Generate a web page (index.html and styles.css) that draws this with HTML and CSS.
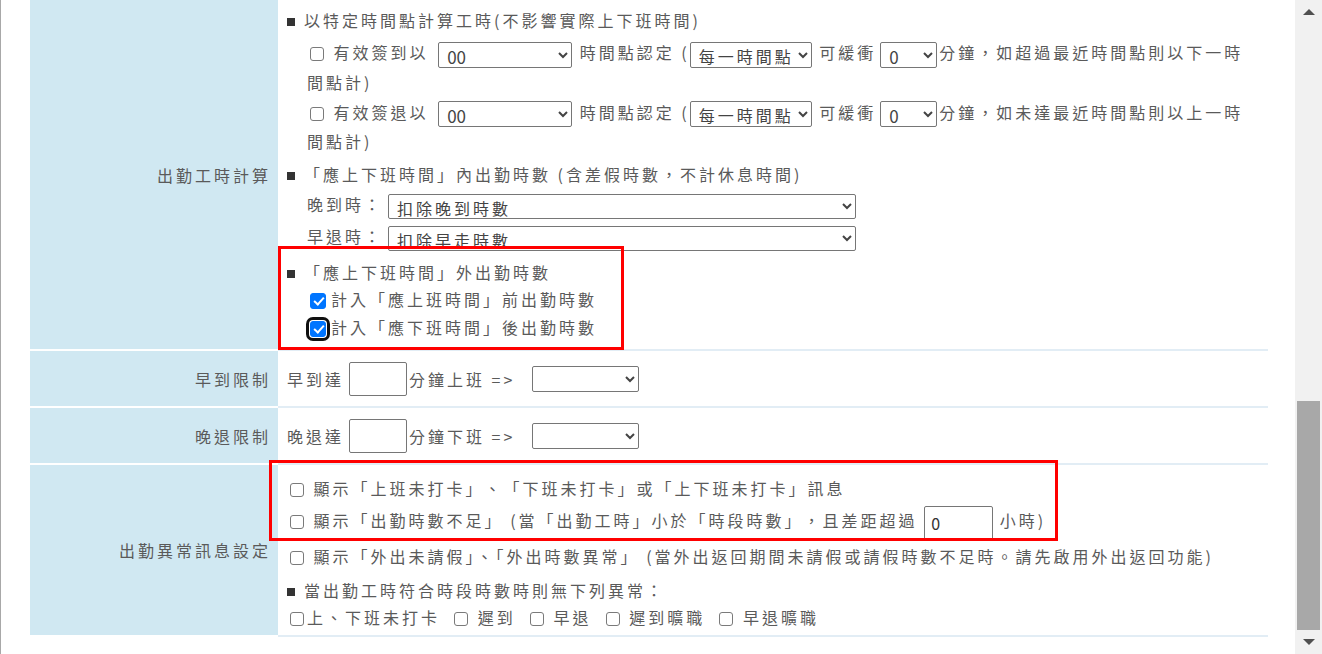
FILE: index.html
```html
<!DOCTYPE html>
<html lang="zh-Hant">
<head>
<meta charset="utf-8">
<title>出勤設定</title>
<link rel="stylesheet" href="styles.css">
</head>
<body>
<div class="frame">
  <div class="main">
    <div class="table">
      <div class="row">
        <div class="label">出勤工時計算</div>
        <div class="content c1">
          <div class="ln l1"><span class="sq"></span>以特定時間點計算工時(不影響實際上下班時間)</div>
          <div class="par ind p1"><input type="checkbox" class="cb"> 有效簽到以 <select class="sel sel-hh"><option>00</option></select> 時間點認定 (<select class="sel sel-every"><option>每一時間點</option></select> 可緩衝<select class="sel sel-m"><option>0</option></select>分鐘，如超過最近時間點則以下一時間點計)</div>
          <div class="par ind p2"><input type="checkbox" class="cb"> 有效簽退以 <select class="sel sel-hh"><option>00</option></select> 時間點認定 (<select class="sel sel-every"><option>每一時間點</option></select> 可緩衝<select class="sel sel-m"><option>0</option></select>分鐘，如未達最近時間點則以上一時間點計)</div>
          <div class="ln l6"><span class="sq"></span>「應上下班時間」內出勤時數 (含差假時數，不計休息時間)</div>
          <div class="ln ind selrow">晚到時：<select class="sel sel-wide"><option>扣除晚到時數</option></select></div>
          <div class="ln ind selrow">早退時：<select class="sel sel-wide"><option>扣除早走時數</option></select></div>
          <div class="ln l9"><span class="sq"></span>「應上下班時間」外出勤時數</div>
          <div class="ln ind l10"><input type="checkbox" class="cb" checked>計入「應上班時間」前出勤時數</div>
          <div class="ln ind l11"><input type="checkbox" class="cb focus" checked>計入「應下班時間」後出勤時數</div>
        </div>
      </div>
      <div class="row">
        <div class="label">早到限制</div>
        <div class="content c2">早到達<input type="text" class="txt txt-min"><span class="after">分鐘上班 =&gt;</span><select class="sel sel-empty"><option></option></select></div>
      </div>
      <div class="row">
        <div class="label">晚退限制</div>
        <div class="content c2">晚退達<input type="text" class="txt txt-min"><span class="after">分鐘下班 =&gt;</span><select class="sel sel-empty"><option></option></select></div>
      </div>
      <div class="row">
        <div class="label">出勤異常訊息設定</div>
        <div class="content c4">
          <div class="ln m1"><input type="checkbox" class="cb"> 顯示「上班未打卡」、「下班未打卡」或「上下班未打卡」訊息</div>
          <div class="ln m2"><input type="checkbox" class="cb"> 顯示「出勤時數不足」 (當「出勤工時」小於「時段時數」，且差距超過 <input type="text" class="txt txt-hr" value="0"> 小時)</div>
          <div class="ln m3"><input type="checkbox" class="cb"> 顯示「外出未請假」、「外出時數異常」 (當外出返回期間未請假或請假時數不足時。請先啟用外出返回功能)</div>
          <div class="ln m4"><span class="sq"></span>當出勤工時符合時段時數時則無下列異常：</div>
          <div class="ln m5"><input type="checkbox" class="cb">上、下班未打卡&nbsp; <input type="checkbox" class="cb cb-n"> 遲到&nbsp; <input type="checkbox" class="cb cb-n"> 早退&nbsp; <input type="checkbox" class="cb cb-n"> 遲到曠職&nbsp; <input type="checkbox" class="cb cb-n"> 早退曠職</div>
        </div>
      </div>
    </div>
    <div class="mark mark1"></div>
    <div class="mark mark2"></div>
  </div>
  <div class="scrollbar">
    <div class="sb-btn"><span class="arrow up"></span></div>
    <div class="sb-track"><div class="sb-thumb"></div></div>
    <div class="sb-btn"><span class="arrow down"></span></div>
  </div>
</div>
</body>
</html>
```
FILE: styles.css
```css
html, body {
  margin: 0;
  padding: 0;
  background: #ffffff;
}
body {
  font-family: "Noto Sans CJK TC", "Noto Sans", sans-serif;
  font-size: 16px;
  letter-spacing: 3px;
  color: #5a5a5a;
  overflow: hidden;
  text-spacing-trim: space-all;
}
.frame {
  display: flex;
  height: 654px;
  border-left: 1px solid #a8a8a8;
  box-sizing: border-box;
}
.main {
  position: relative;
  flex: 1;
  overflow: hidden;
}
.table {
  margin-left: 29px;
  width: 1238px;
}
.row {
  display: flex;
}
.label {
  width: 248px;
  flex: none;
  background: #d0e8f2;
  border-bottom: 2px solid #ffffff;
  box-sizing: border-box;
  display: flex;
  align-items: center;
  justify-content: flex-end;
  padding-right: 7px;
  white-space: nowrap;
}
.content {
  flex: 1;
  border-bottom: 2px solid #e2edf5;
  padding: 0 6px 0 9px;
  box-sizing: border-box;
}
.sq {
  display: inline-block;
  width: 8px;
  height: 8px;
  background: #333333;
  margin-right: 9px;
  vertical-align: 1px;
}
.ind {
  padding-left: 20px;
}
.ln {
  line-height: 27px;
  white-space: nowrap;
}
.par {
  line-height: 29px;
}
.c1 {
  height: 351px;
  padding-top: 7px;
}
.p1 { margin-top: 4px; }
.p2 { margin-top: 1px; }
.l6 { margin-top: 5px; }
.selrow { line-height: 32px; }
.l9 { margin-top: 7px; }
.l11 { line-height: 28px; }

.cb {
  -webkit-appearance: none;
  appearance: none;
  position: relative;
  width: 14px;
  height: 14px;
  margin: 0 3px 0 3px;
  border: 1px solid #7a7a7a;
  border-radius: 3px;
  background: #ffffff;
  box-sizing: border-box;
  vertical-align: -2px;
}
.cb-n {
  margin-left: 1px;
}
.cb:checked {
  width: 16px;
  height: 16px;
  margin-right: 5px;
  background: #0075ff;
  border-color: #0075ff;
  vertical-align: -3px;
}
.cb:checked::after {
  content: "";
  position: absolute;
  left: 4.5px;
  top: 1px;
  width: 4px;
  height: 8px;
  border: solid #ffffff;
  border-width: 0 2.5px 2.5px 0;
  transform: rotate(42deg);
}
.cb.focus {
  border-radius: 3px;
  box-shadow: 0 0 0 1px #ffffff, 0 0 0 4px #101010;
}
.sel {
  font-family: "Noto Sans CJK TC", "Noto Sans", sans-serif;
  font-size: 16px;
  letter-spacing: 3px;
  text-spacing-trim: space-all;
  color: #444444;
  height: 26px;
  padding: 0 4px;
  border: 1px solid #767676;
  border-radius: 2px;
  background: #ffffff;
  vertical-align: middle;
  box-sizing: border-box;
}
.sel-hh { width: 134px; margin: 0 1px 0 3px; font-size: 17px; letter-spacing: 0; }
.sel-every { width: 122px; margin: 0 1px 0 0; }
.sel-m { width: 57px; margin: 0 2px 0 4px; font-size: 17px; letter-spacing: 0; }
.sel-wide { width: 468px; height: 25px; margin-left: 5px; }
.sel-empty { width: 107px; margin-left: 17px; }

.txt {
  font-family: "Noto Sans CJK TC", "Noto Sans", sans-serif;
  font-size: 16px;
  color: #333333;
  height: 34px;
  border: 1px solid #767676;
  border-radius: 2px;
  box-sizing: border-box;
  padding: 0 6px;
  vertical-align: middle;
  margin: 0;
}
.txt-min { width: 58px; margin: 0 2px 0 5px; }
.txt-hr { width: 69px; }

.c2 {
  height: 57px;
  display: flex;
  align-items: center;
  white-space: nowrap;
}

.c4 {
  height: 172px;
  padding-top: 8px;
}
.m1 { line-height: 30px; }
.m2 { line-height: 34px; }
.m3 { line-height: 30px; margin-top: 1px; text-spacing-trim: normal; }
.m4 { margin-top: 6px; }

.mark {
  position: absolute;
  border: 3px solid #ff0000;
  box-sizing: border-box;
}
.mark1 { left: 277px; top: 246px; width: 346px; height: 104px; }
.mark2 { left: 268px; top: 460px; width: 789px; height: 81px; }

.scrollbar {
  width: 27px;
  flex: none;
  background: #f1f1f1;
  display: flex;
  flex-direction: column;
}
.sb-btn {
  height: 25px;
  display: flex;
  align-items: center;
  justify-content: center;
}
.sb-track {
  flex: 1;
}
.sb-thumb {
  margin: 376px 2px 0 2px;
  height: 229px;
  background: #a8a8a8;
}
.arrow {
  width: 0;
  height: 0;
  border-left: 6px solid transparent;
  border-right: 6px solid transparent;
}
.arrow.up { border-bottom: 6px solid #505050; }
.arrow.down { border-top: 6px solid #505050; }
```
